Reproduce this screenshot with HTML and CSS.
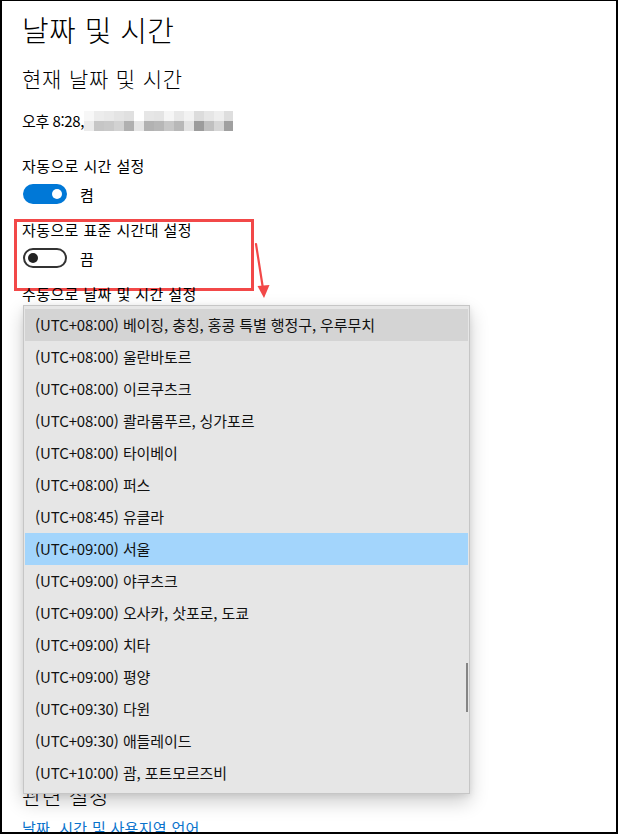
FILE: index.html
```html
<!DOCTYPE html>
<html lang="ko">
<head>
<meta charset="utf-8">
<title>날짜 및 시간</title>
<link rel="stylesheet" href="styles.css">
</head>
<body>
<div class="frame">
  <main class="page">
    <h1 class="title">날짜 및 시간</h1>
    <h2 class="subtitle">현재 날짜 및 시간</h2>
    <p class="now"><span>오후 8:28,</span><span class="mosaic" aria-hidden="true"></span></p>

    <section class="setting">
      <div class="label">자동으로 시간 설정</div>
      <div class="toggle-row"><span class="toggle on"></span><span class="state">켬</span></div>
    </section>

    <section class="setting marked">
      <div class="label">자동으로 표준 시간대 설정</div>
      <div class="toggle-row"><span class="toggle off"></span><span class="state">끔</span></div>
    </section>

    <section class="setting covered">
      <div class="label">수동으로 날짜 및 시간 설정</div>
    </section>

    <h2 class="subtitle related">관련 설정</h2>
    <a class="link" href="#">날짜, 시간 및 사용지역 언어</a>
  </main>

  <svg class="arrow" width="26" height="62" viewBox="0 0 26 62">
    <line x1="8" y1="4" x2="15.2" y2="50" stroke="#f24848" stroke-width="2.2" stroke-linecap="round"/>
    <polygon points="16,58 9.5,46 21.5,45" fill="#f24848"/>
  </svg>

  <div class="dropdown">
    <ul class="options">
      <li class="hover">(UTC+08:00) 베이징, 충칭, 홍콩 특별 행정구, 우루무치</li>
      <li>(UTC+08:00) 울란바토르</li>
      <li>(UTC+08:00) 이르쿠츠크</li>
      <li>(UTC+08:00) 콸라룸푸르, 싱가포르</li>
      <li>(UTC+08:00) 타이베이</li>
      <li>(UTC+08:00) 퍼스</li>
      <li>(UTC+08:45) 유클라</li>
      <li class="selected">(UTC+09:00) 서울</li>
      <li>(UTC+09:00) 야쿠츠크</li>
      <li>(UTC+09:00) 오사카, 삿포로, 도쿄</li>
      <li>(UTC+09:00) 치타</li>
      <li>(UTC+09:00) 평양</li>
      <li>(UTC+09:30) 다윈</li>
      <li>(UTC+09:30) 애들레이드</li>
      <li>(UTC+10:00) 괌, 포트모르즈비</li>
    </ul>
    <span class="scrollbar"></span>
  </div>
</div>
</body>
</html>
```
FILE: styles.css
```css
* { box-sizing: border-box; }
html, body { margin: 0; padding: 0; background: #fff; }
body {
  font-family: "Noto Sans CJK KR", "Noto Sans", sans-serif;
  color: #000;
}
.frame {
  position: relative;
  width: 618px;
  height: 834px;
  border: 2px solid #000;
  border-top-width: 1px;
  overflow: hidden;
  background: #fff;
}
.page {
  padding-left: 20px;
}
.title {
  margin: 8px 0 0;
  font-size: 29px;
  line-height: 40px;
  font-weight: 300;
  letter-spacing: 0.4px;
}
.subtitle {
  margin: 15px 0 0;
  font-size: 21px;
  line-height: 28px;
  font-weight: 300;
  letter-spacing: 0.8px;
}
.now {
  display: flex;
  align-items: center;
  margin: 19px 0 0;
  height: 20px;
  font-size: 15px;
  line-height: 20px;
  letter-spacing: -0.4px;
}
.mosaic {
  display: block;
  width: 149px;
  height: 20px;
  margin-left: 0;
  background:
    linear-gradient(to right,
      #f7f7f7 0 10px, #ececec 10px 20px, #e9e9e9 20px 30px, #e4e4e4 30px 40px, #e0e0e0 40px 50px,
      #ffffff 50px 60px, #e6e6e6 60px 70px, #e4e4e4 70px 80px, #f5f5f5 80px 90px, #e8e8e8 90px 100px,
      #f2f2f2 100px 110px, #dcdcdc 110px 120px, #e6e6e6 120px 130px, #eeeeee 130px 140px, #dedede 140px 149px)
      top / 100% 10px no-repeat,
    linear-gradient(to right,
      #ebebeb 0 10px, #c6c6c6 10px 20px, #c9c9c9 20px 30px, #d2d2d2 30px 40px, #b0b0b0 40px 50px,
      #e6e6e6 50px 60px, #b2b2b2 60px 70px, #b7b7b7 70px 80px, #c7c7c7 80px 90px, #b8b8b8 90px 100px,
      #e3e3e3 100px 110px, #9c9c9c 110px 120px, #c0c0c0 120px 130px, #d6d6d6 130px 140px, #a0a0a0 140px 149px)
      bottom / 100% 10px no-repeat;
}
.setting { position: relative; margin-top: 16px; }
.setting:first-of-type { margin-top: 25px; }
.label {
  font-size: 15px;
  line-height: 20px;
  letter-spacing: 0.4px;
}
.toggle-row {
  display: flex;
  align-items: center;
  gap: 13px;
  margin-top: 8px;
  height: 20px;
  font-size: 15px;
}
.toggle {
  position: relative;
  display: block;
  width: 44px;
  height: 20px;
  border-radius: 10px;
  margin-left: 1px;
}
.toggle::after {
  content: "";
  position: absolute;
  top: 5px;
  width: 10px;
  height: 10px;
  border-radius: 50%;
}
.toggle.on { background: #0078d7; }
.toggle.on::after { right: 5px; background: #fff; }
.toggle.off { border: 2px solid #333; background: #fff; }
.toggle.off::after { left: 3px; top: 3px; background: #222; }
.marked::after {
  content: "";
  position: absolute;
  left: -8px;
  top: -1px;
  width: 234px;
  height: 66px;
  border: 3px solid #f24848;
}
.covered { margin-top: 16px; height: 497px; }
.related { margin-top: 0; }
.link {
  display: block;
  margin-top: 9px;
  font-size: 15px;
  line-height: 20px;
  color: #0a73cc;
  text-decoration: none;
  letter-spacing: 0.3px;
}
.arrow {
  position: absolute;
  left: 246px;
  top: 239px;
}
.dropdown {
  position: absolute;
  left: 21px;
  top: 304px;
  width: 447px;
  height: 489px;
  background: #e6e6e6;
  border: 1px solid #c6c6c6;
  box-shadow: 0 8px 18px rgba(0,0,0,0.2), 0 2px 6px rgba(0,0,0,0.08);
  padding: 3px 1px;
}
.options {
  list-style: none;
  margin: 0;
  padding: 0;
}
.options li {
  height: 32px;
  line-height: 32px;
  padding-left: 10px;
  font-size: 15px;
  color: #111;
  white-space: nowrap;
  letter-spacing: -0.1px;
}
.options li.hover { background: #d4d4d4; }
.options li.selected { background: #a3d5fc; }
.scrollbar {
  position: absolute;
  right: 1px;
  top: 357px;
  width: 2px;
  height: 49px;
  background: #858585;
}
```
